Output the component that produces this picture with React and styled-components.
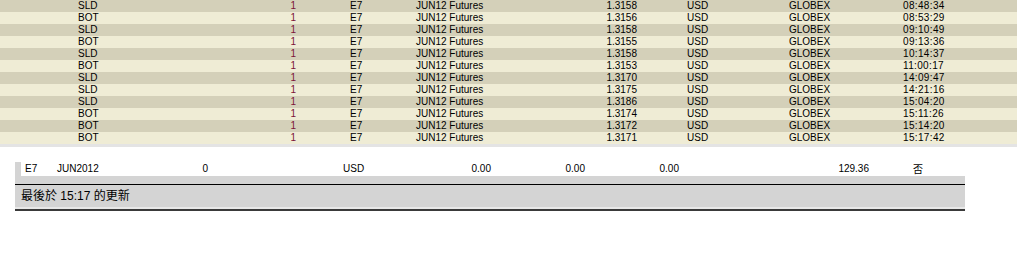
import React from "react";
import styled, { createGlobalStyle } from "styled-components";

const Global = createGlobalStyle`
  html, body { margin: 0; padding: 0; background: #fff; }
  body { font-family: "Liberation Sans", Arial, sans-serif; color: #000; }
`;

const trades = [
  ["SLD", "1.3158", "08:48:34"],
  ["BOT", "1.3156", "08:53:29"],
  ["SLD", "1.3158", "09:10:49"],
  ["BOT", "1.3155", "09:13:36"],
  ["SLD", "1.3158", "10:14:37"],
  ["BOT", "1.3153", "11:00:17"],
  ["SLD", "1.3170", "14:09:47"],
  ["SLD", "1.3175", "14:21:16"],
  ["SLD", "1.3186", "15:04:20"],
  ["BOT", "1.3174", "15:11:26"],
  ["BOT", "1.3172", "15:14:20"],
  ["BOT", "1.3171", "15:17:42"],
];

const TradeTable = styled.div`
  display: flex;
  flex-direction: column;
  border-bottom: 3px solid #e4e4e4;
`;

const TradeRow = styled.div`
  display: grid;
  grid-template-columns: 78px 182px 36px 120px 144px 77px 152px 114px 1fr;
  height: 12px;
  line-height: 12px;
  font-size: 10px;
  background: ${(p) => (p.$odd ? "#efecd5" : "#d4d0b9")};
  white-space: nowrap;
`;

const Cell = styled.div`
  text-align: ${(p) => (p.$right ? "right" : "left")};
  padding-left: ${(p) => p.$pad || 0}px;
  color: ${(p) => p.$color || "inherit"};
  letter-spacing: ${(p) => (p.$digits ? "0.35px" : "normal")};
  font-family: ${(p) =>
    p.$cjk ? '"Noto Sans CJK KR", sans-serif' : "inherit"};
`;

const Summary = styled.div`
  margin: 15px 52px 0 15px;
  width: 950px;
  display: flex;
  flex-direction: column;
`;

const PositionRow = styled.div`
  display: grid;
  grid-template-columns: 36px 123px 28px 192px 91px 94px 94px 190px 1fr;
  height: 14px;
  line-height: 14px;
  font-size: 10px;
  border-left: 6px solid #d4d4d4;
  background: #fff;
  white-space: nowrap;
`;

const Spacer = styled.div`
  height: 8px;
  background: #d4d4d4;
  border-bottom: 1px solid #000;
`;

const Footer = styled.div`
  height: 22px;
  line-height: 22px;
  background: #d4d4d4;
  font-size: 12px;
  padding-left: 6px;
  font-family: "Liberation Sans", "Noto Sans CJK TC", sans-serif;
  border-bottom: 2px solid #e8e8e8;
  box-shadow: 0 2px 0 #3a3a3a;
  margin-bottom: 2px;
`;

export default function App() {
  return (
    <>
      <Global />
      <TradeTable>
        {trades.map(([side, price, time], i) => (
          <TradeRow key={i} $odd={i % 2 === 1}>
            <Cell />
            <Cell>{side}</Cell>
            <Cell $right $color="#7c1238">1</Cell>
            <Cell $pad={54}>E7</Cell>
            <Cell>JUN12 Futures</Cell>
            <Cell $right>{price}</Cell>
            <Cell $pad={50}>USD</Cell>
            <Cell>GLOBEX</Cell>
            <Cell $digits>{time}</Cell>
          </TradeRow>
        ))}
      </TradeTable>
      <Summary>
        <PositionRow>
          <Cell $pad={4}>E7</Cell>
          <Cell>JUN2012</Cell>
          <Cell $right>0</Cell>
          <Cell $pad={135}>USD</Cell>
          <Cell $right>0.00</Cell>
          <Cell $right>0.00</Cell>
          <Cell $right>0.00</Cell>
          <Cell $right>129.36</Cell>
          <Cell $pad={44} $cjk>否</Cell>
        </PositionRow>
        <Spacer />
        <Footer>最後於 15:17 的更新</Footer>
      </Summary>
    </>
  );
}
